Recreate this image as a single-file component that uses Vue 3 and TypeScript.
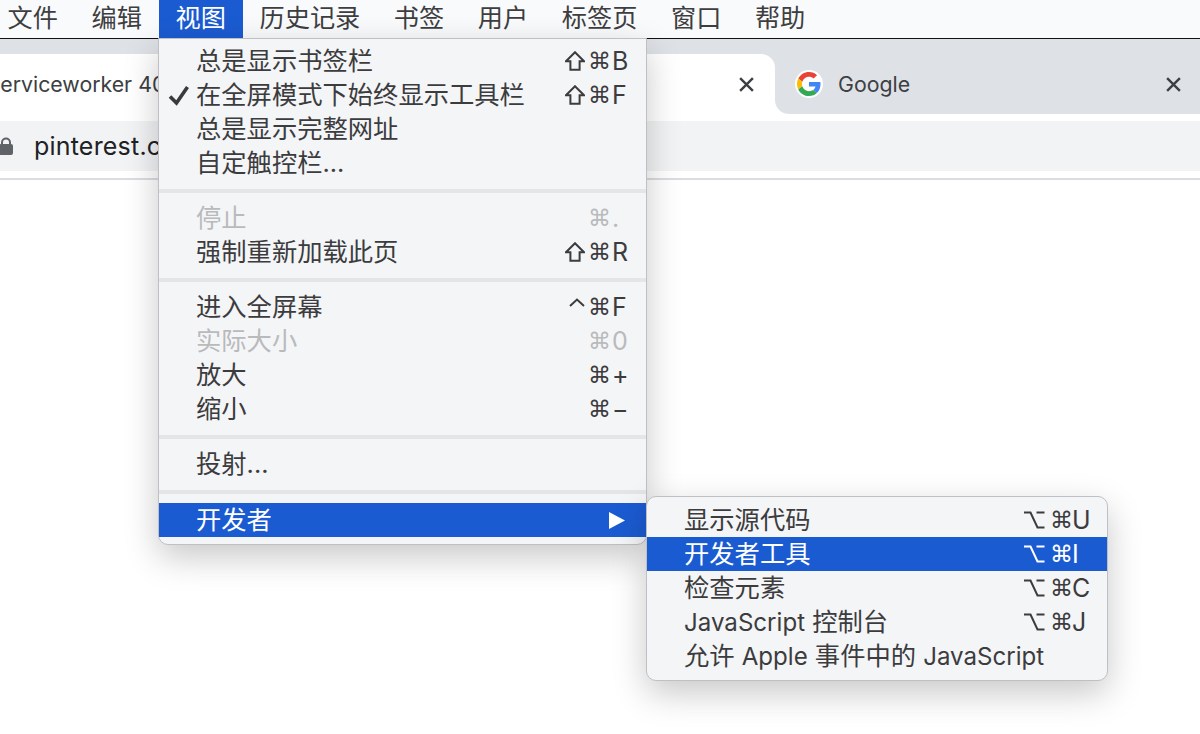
<script setup lang="ts">
interface Part {
  text: string
  latin?: boolean
}

interface Row {
  label?: string
  parts?: Part[]
  mod?: 'shift' | 'ctrl' | 'option'
  cmd?: boolean
  key?: string
  check?: boolean
  disabled?: boolean
  active?: boolean
  arrow?: boolean
  sep?: boolean
  wide?: boolean
}

const bar = [
  { label: '文件' },
  { label: '编辑' },
  { label: '视图', active: true },
  { label: '历史记录' },
  { label: '书签' },
  { label: '用户' },
  { label: '标签页' },
  { label: '窗口' },
  { label: '帮助' },
]

const viewMenu: Row[] = [
  { label: '总是显示书签栏', mod: 'shift', cmd: true, key: 'B' },
  { label: '在全屏模式下始终显示工具栏', check: true, mod: 'shift', cmd: true, key: 'F' },
  { label: '总是显示完整网址' },
  { label: '自定触控栏...' },
  { sep: true },
  { label: '停止', disabled: true, cmd: true, key: '.' },
  { label: '强制重新加载此页', mod: 'shift', cmd: true, key: 'R' },
  { sep: true },
  { label: '进入全屏幕', mod: 'ctrl', cmd: true, key: 'F' },
  { label: '实际大小', disabled: true, cmd: true, key: '0' },
  { label: '放大', cmd: true, key: '+' },
  { label: '缩小', cmd: true, key: '−' },
  { sep: true },
  { label: '投射...' },
  { sep: true, wide: true },
  { label: '开发者', active: true, arrow: true },
]

const devMenu: Row[] = [
  { label: '显示源代码', mod: 'option', cmd: true, key: 'U' },
  { label: '开发者工具', mod: 'option', cmd: true, key: 'I', active: true },
  { label: '检查元素', mod: 'option', cmd: true, key: 'C' },
  {
    parts: [{ text: 'JavaScript', latin: true }, { text: ' 控制台' }],
    mod: 'option',
    cmd: true,
    key: 'J',
  },
  {
    parts: [
      { text: '允许 ' },
      { text: 'Apple', latin: true },
      { text: ' 事件中的 ' },
      { text: 'JavaScript', latin: true },
    ],
  },
]
</script>

<template>
  <div class="page">
    <nav class="menubar">
      <span v-for="item in bar" :key="item.label" class="bar-item" :class="{ on: item.active }">{{ item.label }}</span>
    </nav>

    <div class="tabstrip">
      <div class="tab active">
        <span class="tab-title clipped">serviceworker 404</span>
        <svg class="close" viewBox="0 0 16 16"><path d="M2 2L14 14M14 2L2 14" /></svg>
      </div>
      <div class="tab-slot">
        <div class="tab google">
          <span class="favicon">
            <svg viewBox="0 0 48 48">
              <path fill="#EA4335" d="M24 9.5c3.54 0 6.71 1.22 9.21 3.6l6.85-6.85C35.9 2.38 30.47 0 24 0 14.62 0 6.51 5.38 2.56 13.22l7.98 6.19C12.43 13.72 17.74 9.5 24 9.5z" />
              <path fill="#4285F4" d="M46.98 24.55c0-1.57-.15-3.09-.38-4.55H24v9.02h12.94c-.58 2.96-2.26 5.48-4.78 7.18l7.73 6c4.51-4.18 7.09-10.36 7.09-17.65z" />
              <path fill="#FBBC05" d="M10.53 28.59c-.48-1.45-.76-2.99-.76-4.59s.27-3.14.76-4.59l-7.98-6.19C.92 16.46 0 20.12 0 24c0 3.88.92 7.54 2.56 10.78l7.97-6.19z" />
              <path fill="#34A853" d="M24 48c6.48 0 11.93-2.13 15.89-5.81l-7.73-6c-2.15 1.45-4.92 2.3-8.16 2.3-6.26 0-11.57-4.22-13.47-9.91l-7.98 6.19C6.51 42.62 14.62 48 24 48z" />
            </svg>
          </span>
          <span class="tab-title">Google</span>
          <svg class="close" viewBox="0 0 16 16"><path d="M2 2L14 14M14 2L2 14" /></svg>
        </div>
      </div>
    </div>

    <div class="toolbar">
      <svg class="lock" viewBox="0 0 14 18">
        <path d="M3 8V5.5a4 4 0 0 1 8 0V8" fill="none" stroke="#5f6368" stroke-width="2" />
        <rect x="0" y="7" width="14" height="11" rx="2" fill="#5f6368" />
      </svg>
      <span class="url">pinterest.com</span>
    </div>
    <div class="toolbar-line"></div>

    <div class="menu view-menu">
      <template v-for="(row, i) in viewMenu" :key="i">
        <div v-if="row.sep" class="sep" :class="{ wide: row.wide }"></div>
        <div v-else class="row" :class="{ disabled: row.disabled, active: row.active }">
          <svg v-if="row.check" class="check" viewBox="0 0 22 22">
            <path d="M2 12.5L8.5 19L19.5 3" fill="none" stroke="#3a3a3c" stroke-width="3.6" />
          </svg>
          <span class="label">{{ row.label }}</span>
          <svg v-if="row.arrow" class="arrow" viewBox="0 0 16 17"><path d="M0 0L16 8.5L0 17Z" fill="#fff" /></svg>
          <span v-if="row.cmd" class="shortcut">
            <span class="mod">
              <svg v-if="row.mod === 'shift'" viewBox="0 0 20 20" aria-label="Shift"><path d="M10 1.2L19 10.2H14.6V18.8H5.4V10.2H1Z" /></svg>
              <svg v-else-if="row.mod === 'ctrl'" viewBox="0 0 20 20" aria-label="Control"><path d="M5 9L12 2.6L19 9" /></svg>
            </span>
            <span class="cmd">⌘</span>
            <span class="keycap">{{ row.key }}</span>
          </span>
        </div>
      </template>
    </div>

    <div class="menu dev-menu">
      <div v-for="(row, i) in devMenu" :key="i" class="row" :class="{ active: row.active }">
        <span class="label">
          <template v-if="row.parts">
            <span v-for="part in row.parts" :key="part.text" :class="{ latin: part.latin }">{{ part.text }}</span>
          </template>
          <template v-else>{{ row.label }}</template>
        </span>
        <span v-if="row.cmd" class="shortcut">
          <span class="mod">
            <svg viewBox="0 0 22 20" aria-label="Option"><path d="M1 2.5H7.5L14.5 17.5H21.5M13.5 2.5H21.5" /></svg>
          </span>
          <span class="cmd">⌘</span>
          <span class="keycap">{{ row.key }}</span>
        </span>
      </div>
    </div>
  </div>
</template>

<style>
html,
body {
  margin: 0;
  background: #fff;
  overflow: hidden;
}
</style>

<style scoped>
.page {
  position: relative;
  width: 1200px;
  height: 734px;
  overflow: hidden;
  background: #fff;
  font-family: Inter, "Noto Sans CJK SC", sans-serif;
  color: #3c3c3e;
}
.menubar {
  display: flex;
  height: 38px;
  background: #f9fafb;
  border-bottom: 1.5px solid #111;
  box-sizing: content-box;
}
.bar-item {
  padding: 0 16.8px;
  font-size: 25.2px;
  line-height: 37px;
  color: #3e3e40;
  white-space: nowrap;
}
.bar-item:first-child {
  padding-left: 7.6px;
}
.bar-item.on {
  background: #1b5bd1;
  color: #fff;
}
.tabstrip {
  display: flex;
  height: 75px;
  background: #dee1e6;
  overflow: hidden;
  align-items: flex-end;
}
.tab {
  display: flex;
  align-items: center;
  height: 60px;
  box-sizing: border-box;
}
.tab.active {
  width: 775px;
  flex: none;
  background: #fff;
  border-radius: 0 14px 0 0;
  padding-right: 20px;
  justify-content: space-between;
}
.tab-slot {
  flex: 1;
  background: #fff;
}
.tab.google {
  background: #dee1e6;
  padding: 0 18px 0 20px;
  border-radius: 0 0 0 14px;
}
.tab-title {
  font-size: 21.3px;
  color: #3c4043;
  white-space: nowrap;
}
.clipped {
  margin-left: -11px;
}
.favicon {
  display: flex;
  align-items: center;
  justify-content: center;
  width: 28px;
  height: 28px;
  border-radius: 50%;
  background: #fff;
  margin-right: 15px;
}
.favicon svg {
  width: 24px;
  height: 24px;
}
.close {
  width: 17px;
  height: 17px;
  flex: none;
  fill: none;
  stroke: #3c4043;
  stroke-width: 2.3;
}
.google .close {
  margin-left: auto;
}
.toolbar {
  display: flex;
  align-items: center;
  height: 50px;
  margin-top: 7px;
  background: #f1f3f4;
}
.lock {
  width: 14px;
  height: 18px;
  margin-left: -1px;
  flex: none;
}
.url {
  margin-left: 21px;
  font-size: 25px;
  color: #202124;
  letter-spacing: 0.2px;
}
.toolbar-line {
  height: 2px;
  margin-top: 7px;
  background: #dadce0;
}
.menu {
  position: absolute;
  box-sizing: border-box;
  background: #f4f5f7;
  border: 1px solid #bfc0c3;
  box-shadow: 0 12px 34px rgba(0, 0, 0, 0.22);
}
.view-menu {
  left: 158px;
  top: 38px;
  width: 489px;
  height: 507px;
  padding-top: 5px;
  border-radius: 0 0 10px 10px;
}
.dev-menu {
  left: 646px;
  top: 496px;
  width: 462px;
  height: 185px;
  padding-top: 6px;
  border-radius: 10px;
}
.row {
  position: relative;
  display: flex;
  align-items: center;
  height: 34px;
  padding-left: 37px;
  font-size: 25.3px;
  white-space: nowrap;
  color: #3c3c3e;
}
.label {
  line-height: 34px;
}
.latin {
  font-size: 24.1px;
}
.row.disabled {
  color: #b9babc;
}
.row.active {
  background: #1b5bd1;
  color: #fff;
}
.sep {
  height: 21px;
  display: flex;
  align-items: center;
}
.sep.wide {
  height: 22px;
}
.sep::before {
  content: "";
  display: block;
  width: 100%;
  height: 4px;
  background: #e4e5e7;
}
.check {
  position: absolute;
  left: 9px;
  top: 6px;
  width: 22px;
  height: 22px;
}
.arrow {
  position: absolute;
  left: 450px;
  top: 9px;
  width: 16px;
  height: 17px;
}
.shortcut {
  position: absolute;
  display: flex;
  align-items: center;
  left: 406px;
  top: 0;
  height: 34px;
  line-height: 34px;
}
.dev-menu .shortcut {
  left: 376px;
}
.mod {
  display: flex;
  align-items: center;
  width: 23px;
  height: 34px;
}
.mod svg {
  width: 20px;
  height: 20px;
  fill: none;
  stroke: currentColor;
  stroke-width: 2;
}
.dev-menu .mod {
  width: 27px;
}
.dev-menu .mod svg {
  width: 22px;
}
.cmd {
  width: 20px;
  font-family: "DejaVu Sans", sans-serif;
  font-size: 23px;
  text-align: center;
}
.keycap {
  margin-left: 4px;
  font-size: 25px;
}
.dev-menu .keycap {
  margin-left: 2px;
}
</style>
